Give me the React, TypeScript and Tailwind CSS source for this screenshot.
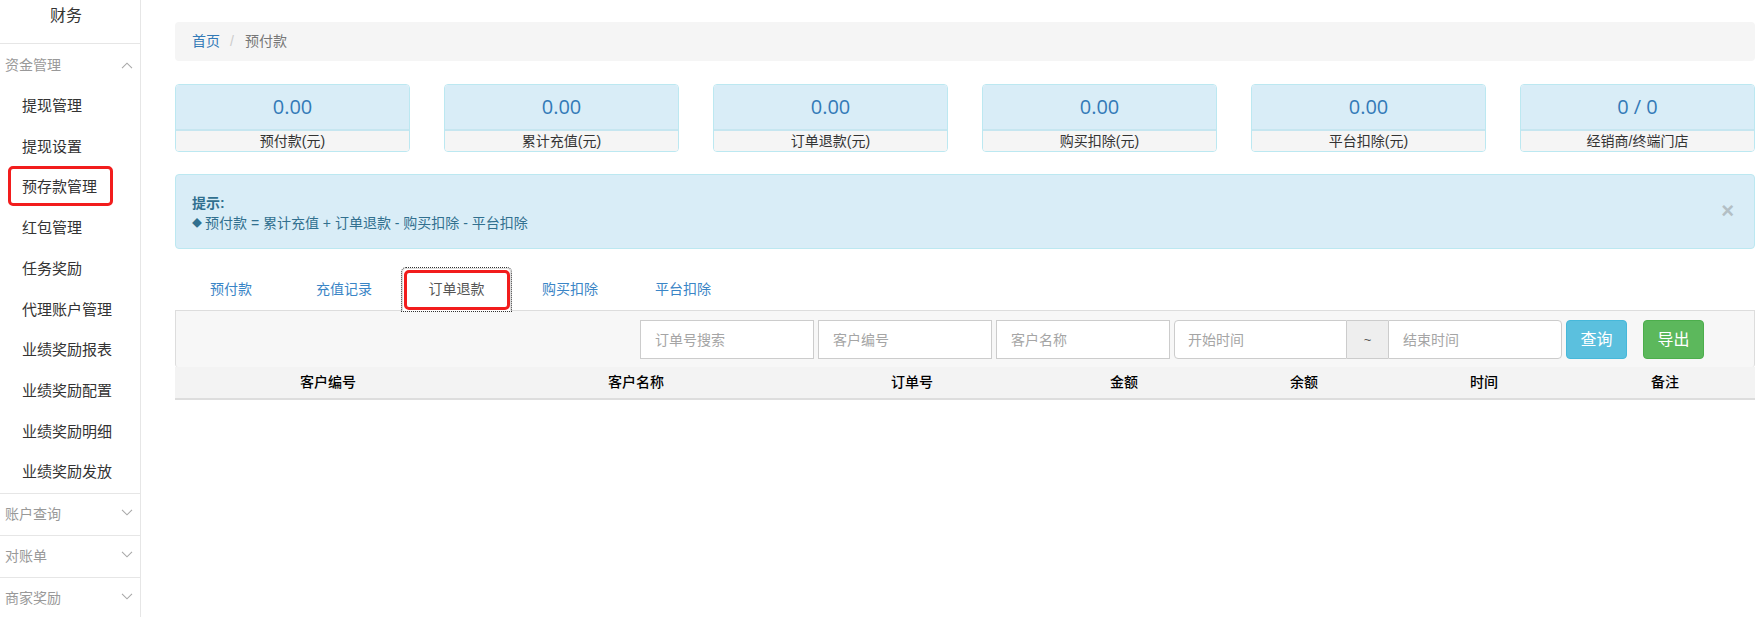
import React from "react";

const FONT = "font-['Liberation_Sans','Noto_Sans_CJK_SC',sans-serif]";

function ChevronUp() {
  return (
    <svg width="12" height="7" viewBox="0 0 12 7">
      <polyline points="1,6.2 6,1.2 11,6.2" fill="none" stroke="#a8a8a8" strokeWidth="1.1" />
    </svg>
  );
}
function ChevronDown() {
  return (
    <svg width="12" height="7" viewBox="0 0 12 7">
      <polyline points="1,0.8 6,5.8 11,0.8" fill="none" stroke="#a8a8a8" strokeWidth="1.1" />
    </svg>
  );
}

const items = [
  "提现管理",
  "提现设置",
  "预存款管理",
  "红包管理",
  "任务奖励",
  "代理账户管理",
  "业绩奖励报表",
  "业绩奖励配置",
  "业绩奖励明细",
  "业绩奖励发放",
];

const cards = [
  ["0.00", "预付款(元)"],
  ["0.00", "累计充值(元)"],
  ["0.00", "订单退款(元)"],
  ["0.00", "购买扣除(元)"],
  ["0.00", "平台扣除(元)"],
  ["0 / 0", "经销商/终端门店"],
];

const tabs = ["预付款", "充值记录", "订单退款", "购买扣除", "平台扣除"];
const cols = ["客户编号", "客户名称", "订单号", "金额", "余额", "时间", "备注"];

export default function App() {
  return (
    <div className={`flex w-full h-[617px] overflow-hidden bg-white ${FONT}`}>
      {/* Sidebar */}
      <div className="w-[141px] shrink-0 border-r border-[#e6e6e6] h-[617px]">
        <div className="h-[44px] border-b border-[#e6e6e6] flex justify-center pt-[4px] pr-[8px] text-[16px] leading-[24px] text-[#333]">
          财务
        </div>
        <div className="h-[42px] flex items-center justify-between pl-[5px] pr-[7px] text-[14px] text-[#999]">
          <span>资金管理</span>
          <ChevronUp />
        </div>
        {items.map((t) => (
          <div key={t} className="relative h-[40.7px] flex items-center pl-[22px] text-[15px] text-[#333]">
            {t}
            {t === "预存款管理" && (
              <span className="absolute left-[8px] top-[-1px] w-[105px] h-[40px] border-[3px] border-[#f21d1d] rounded-[5px]" />
            )}
          </div>
        ))}
        {["账户查询", "对账单", "商家奖励"].map((t) => (
          <div
            key={t}
            className="h-[42px] border-t border-[#e6e6e6] flex items-center justify-between pl-[5px] pr-[7px] text-[14px] text-[#999]"
          >
            <span>{t}</span>
            <span className="-mt-[3px]">
              <ChevronDown />
            </span>
          </div>
        ))}
      </div>

      {/* Main */}
      <div className="flex-1 min-w-0 pl-[34px] pr-[7px] pt-[22px]">
        {/* Breadcrumb */}
        <div className="h-[39px] rounded-[4px] bg-[#f5f5f5] flex items-center pl-[17px] text-[14px]">
          <span className="text-[#337ab7]">首页</span>
          <span className="ml-[10px] mr-[11px] text-[#ccc]">/</span>
          <span className="text-[#777]">预付款</span>
        </div>

        {/* Cards */}
        <div className="mt-[23px] grid grid-cols-6 gap-x-[34px]">
          {cards.map(([v, l]) => (
            <div key={l} className="border border-[#bce8f1] rounded-[4px] overflow-hidden">
              <div className="h-[46px] bg-[#d9edf7] border-b-2 border-[#c6e6f0] flex items-center justify-center">
                <span className="font-['Open_Sans',sans-serif] text-[20px] text-[#337ab7]">{v}</span>
              </div>
              <div className="h-[20px] bg-[#f5f5f5] text-center text-[14px] leading-[20px] text-[#333]">{l}</div>
            </div>
          ))}
        </div>

        {/* Alert */}
        <div className="mt-[22px] h-[75px] border border-[#bce8f1] bg-[#d9edf7] rounded-[4px] flex items-start justify-between pl-[16px] pr-[20px] pt-[18px] text-[#31708f] text-[14px]">
          <div className="leading-[20px]">
            <div className="font-bold">提示:</div>
            <div>
              <span className="text-[10px] align-[1px] mr-[3px]">◆</span>预付款 = 累计充值 + 订单退款 - 购买扣除 - 平台扣除
            </div>
          </div>
          <span className="mt-[7px] text-[22px] leading-[22px] font-bold text-[#b3bfc5] font-['Liberation_Sans',sans-serif]">×</span>
        </div>

        {/* Tabs */}
        <div className="mt-[19px] flex items-end h-[43px] border-b border-[#ddd] pl-[1px] text-[14px]">
          {tabs.map((t) =>
            t === "订单退款" ? (
              <div
                key={t}
                className="relative w-[109px] mr-[4px] h-[43px] -mb-px bg-white border border-[#ddd] border-b-transparent rounded-t-[4px] outline outline-1 outline-dotted outline-[#333] flex items-center justify-center text-[#555]"
              >
                {t}
                <span className="absolute left-[1px] top-[1px] right-[0px] bottom-[0px] border-[3px] border-[#f21d1d] rounded-[5px]" />
              </div>
            ) : (
              <div key={t} className="w-[110px] mr-[3px] h-[42px] flex items-center justify-center text-[#3a85c6]">
                {t}
              </div>
            )
          )}
        </div>

        {/* Toolbar */}
        <div className="h-[56px] bg-[#f7f7f7] border-x border-[#ddd] rounded-b-[3px] flex justify-end items-start pt-[9px] pr-[50px] text-[14px]">
          <div className="flex gap-[4px]">
            {["订单号搜索", "客户编号", "客户名称"].map((p) => (
              <input
                key={p}
                placeholder={p}
                className={`w-[174px] h-[39px] border border-[#ccc] bg-white px-[14px] text-[14px] placeholder:text-[#a5a5a5] outline-none ${FONT}`}
              />
            ))}
            <div className="flex">
              <input
                placeholder="开始时间"
                className={`w-[173px] h-[39px] border border-[#ccc] rounded-l-[4px] bg-white px-[13px] text-[14px] placeholder:text-[#a5a5a5] outline-none ${FONT}`}
              />
              <div className="w-[41px] h-[39px] border-y border-[#ccc] bg-[#eee] flex items-center justify-center text-[#555] text-[13px]">
                ~
              </div>
              <input
                placeholder="结束时间"
                className={`w-[174px] h-[39px] border border-[#ccc] rounded-r-[4px] bg-white px-[14px] text-[14px] placeholder:text-[#a5a5a5] outline-none ${FONT}`}
              />
            </div>
            <button className="w-[61px] h-[39px] rounded-[4px] bg-[#5bc0de] border border-[#46b8da] text-white text-[16px]">
              查询
            </button>
            <button className="ml-[12px] w-[61px] h-[39px] rounded-[4px] bg-[#5cb85c] border border-[#4cae4c] text-white text-[16px]">
              导出
            </button>
          </div>
        </div>

        {/* Table header */}
        <div className="grid grid-cols-[306px_310px_242px_182px_178px_182px_180px] h-[33px] bg-[#f3f3f3] border-b-2 border-[#ddd] items-center text-center text-[14px] text-black font-medium">
          {cols.map((c) => (
            <div key={c}>{c}</div>
          ))}
        </div>
      </div>
    </div>
  );
}
